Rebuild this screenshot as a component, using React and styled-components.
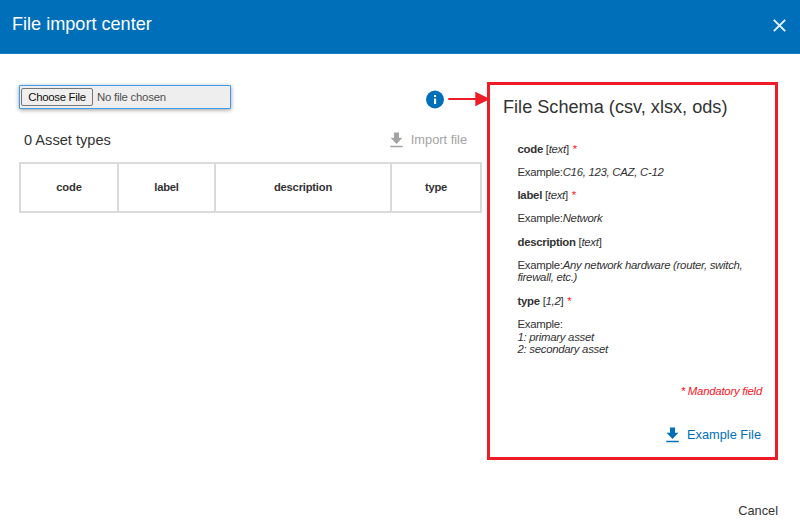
import React from "react";
import styled, { createGlobalStyle } from "styled-components";

const GlobalStyle = createGlobalStyle`
  *, *::before, *::after { box-sizing: border-box; }
  body {
    margin: 0;
    background: #fff;
    color: #333;
    font-family: "Liberation Sans", Arial, sans-serif;
    font-size: 11.4px;
  }
  p, h1, h2, h3 { margin: 0; font-weight: 400; }
  button { font: inherit; letter-spacing: inherit; border: 0; padding: 0; background: none; cursor: pointer; }
`;

const Dialog = styled.main`
  display: flex;
  flex-direction: column;
  width: 800px;
  height: 531px;
  overflow: hidden;
`;

const Header = styled.header`
  display: flex;
  flex: none;
  justify-content: space-between;
  height: 54px;
  padding: 14px 14px 0 12px;
  background: #006fba;
  border-bottom: 1px solid #1a7dc0;
  color: #fff;
`;

const Title = styled.h1`
  font-size: 18.1px;
  line-height: 21px;
`;

const CloseButton = styled.button`
  display: flex;
  width: 13px;
  height: 13px;
  margin-top: 5px;
  color: #e6f3fb;
`;

const Content = styled.div`
  display: flex;
  flex: none;
  height: 406px;
  padding: 28px 22px 0 19px;
`;

const ImportPane = styled.section`
  flex: none;
  width: 462px;
`;

const UploadRow = styled.div`
  display: flex;
  justify-content: space-between;
  height: 42px;
  padding-top: 3px;
`;

const FilePicker = styled.div`
  display: flex;
  align-items: center;
  width: 212px;
  height: 24px;
  padding-left: 1px;
  border: 1px solid #3e9be6;
  border-radius: 1px;
  background: #eee;
  box-shadow: 0 1px 4px rgba(0, 0, 0, 0.4);
  color: #505050;
  font-size: 11.4px;
  letter-spacing: -0.24px;
  line-height: 14px;
`;

const ChooseButton = styled.button`
  width: 72px;
  height: 18px;
  margin-right: 4px;
  border: 1px solid #767676;
  border-radius: 2px;
  background: #efefef;
  color: #111;
  letter-spacing: -0.3px;
  line-height: 15px;
  white-space: nowrap;
`;

const InfoLink = styled.div`
  display: flex;
  align-items: center;
  height: 20px;
  margin: 4px -9px 0 0;
`;

const SummaryRow = styled.div`
  display: flex;
  justify-content: space-between;
  height: 38px;
  padding: 7px 14px 0 5px;
`;

const Count = styled.h2`
  font-size: 14.6px;
  line-height: 18px;
`;

const DownloadAction = styled.button`
  display: flex;
  align-items: center;
  height: 18px;
  gap: 8px;
  color: ${({ $disabled }) => ($disabled ? "#a3a3a3" : "#006fba")};
  font-size: 12.8px;
  line-height: 18px;
`;

const FieldTable = styled.table`
  width: 461px;
  height: 51px;
  border-collapse: collapse;
  table-layout: fixed;
`;

const FieldHead = styled.th`
  width: ${({ $width }) => $width}px;
  padding: 0 0 1px;
  border: 2px solid #dadada;
  font-size: 11.2px;
  font-weight: 700;
  letter-spacing: -0.2px;
  text-align: center;
`;

const SchemaPanel = styled.aside`
  display: flex;
  flex: none;
  flex-direction: column;
  width: 291px;
  height: 378px;
  margin-left: 6px;
  padding: 12px 13px 0 13px;
  border: 3px solid #ee1c27;
`;

const SchemaTitle = styled.h2`
  font-size: 18.15px;
  line-height: 21px;
`;

const FieldList = styled.div`
  display: flex;
  flex-direction: column;
  gap: 10.8px;
  height: 243px;
  padding: 24.5px 0 0 14.5px;
`;

const Line = styled.p`
  font-size: 11.4px;
  letter-spacing: -0.29px;
  line-height: 12.5px;
  white-space: pre-line;
`;

const Required = styled.span`
  margin-left: 1px;
  color: #f22;
`;

const MandatoryNote = styled.p`
  height: 42px;
  padding-top: 24px;
  color: #f4141e;
  font-size: 11.4px;
  font-style: italic;
  letter-spacing: -0.25px;
  line-height: 13px;
  text-align: right;
`;

const PanelActions = styled.div`
  display: flex;
  justify-content: flex-end;
  padding: 23px 1px 0 0;
`;

const Footer = styled.footer`
  display: flex;
  justify-content: flex-end;
  padding: 43px 22px 0 0;
`;

const CancelButton = styled.button`
  color: #333;
  font-size: 12.8px;
  line-height: 15px;
`;

const columns = [
  { name: "code", width: 98 },
  { name: "label", width: 97 },
  { name: "description", width: 176 },
  { name: "type", width: 90 },
];

const fields = [
  { name: "code", kind: "text", required: true, example: "C16, 123, CAZ, C-12" },
  { name: "label", kind: "text", required: true, example: "Network" },
  { name: "description", kind: "text", example: "Any network hardware (router, switch, firewall, etc.)" },
  { name: "type", kind: "1,2", required: true, example: "\n1: primary asset\n2: secondary asset" },
];

const CloseIcon = () => (
  <svg width="13" height="13" viewBox="0 0 13 13" fill="none" stroke="currentColor" strokeWidth="1.9">
    <path d="M.8.8l11.4 11.4M12.2.8L.8 12.2" />
  </svg>
);

const DownloadIcon = () => (
  <svg width="13" height="16" viewBox="0 0 13 16" fill="currentColor">
    <path d="M4 .5h5v5.3h3.4L6.5 11.9.6 5.8H4zM.3 13.7h12.4v1.6H.3z" />
  </svg>
);

const InfoArrow = () => (
  <svg width="64" height="20" viewBox="0 0 64 20">
    <circle cx="9" cy="10.5" r="9" fill="#006fba" />
    <path d="M8 6h2.1v2.1H8zM8 9.5h2.1v5.4H8z" fill="#fff" />
    <path d="M22.3 9h27V2.8L64 10l-14.7 7.2V11h-27z" fill="#ee1c27" />
  </svg>
);

function SchemaField({ field }) {
  return (
    <>
      <Line>
        <b>{field.name}</b> [<i>{field.kind}</i>] {field.required && <Required>*</Required>}
      </Line>
      <Line>
        Example:<i>{field.example}</i>
      </Line>
    </>
  );
}

export default function App() {
  return (
    <>
      <GlobalStyle />
      <Dialog>
        <Header>
          <Title>File import center</Title>
          <CloseButton aria-label="Close"><CloseIcon /></CloseButton>
        </Header>
        <Content>
          <ImportPane>
            <UploadRow>
              <FilePicker>
                <ChooseButton>Choose File</ChooseButton>
                No file chosen
              </FilePicker>
              <InfoLink><InfoArrow /></InfoLink>
            </UploadRow>
            <SummaryRow>
              <Count>0 Asset types</Count>
              <DownloadAction $disabled><DownloadIcon />Import file</DownloadAction>
            </SummaryRow>
            <FieldTable>
              <thead>
                <tr>
                  {columns.map((c) => <FieldHead key={c.name} $width={c.width}>{c.name}</FieldHead>)}
                </tr>
              </thead>
            </FieldTable>
          </ImportPane>
          <SchemaPanel>
            <SchemaTitle>File Schema (csv, xlsx, ods)</SchemaTitle>
            <FieldList>
              {fields.map((f) => <SchemaField key={f.name} field={f} />)}
            </FieldList>
            <MandatoryNote>* Mandatory field</MandatoryNote>
            <PanelActions>
              <DownloadAction><DownloadIcon />Example File</DownloadAction>
            </PanelActions>
          </SchemaPanel>
        </Content>
        <Footer><CancelButton>Cancel</CancelButton></Footer>
      </Dialog>
    </>
  );
}
